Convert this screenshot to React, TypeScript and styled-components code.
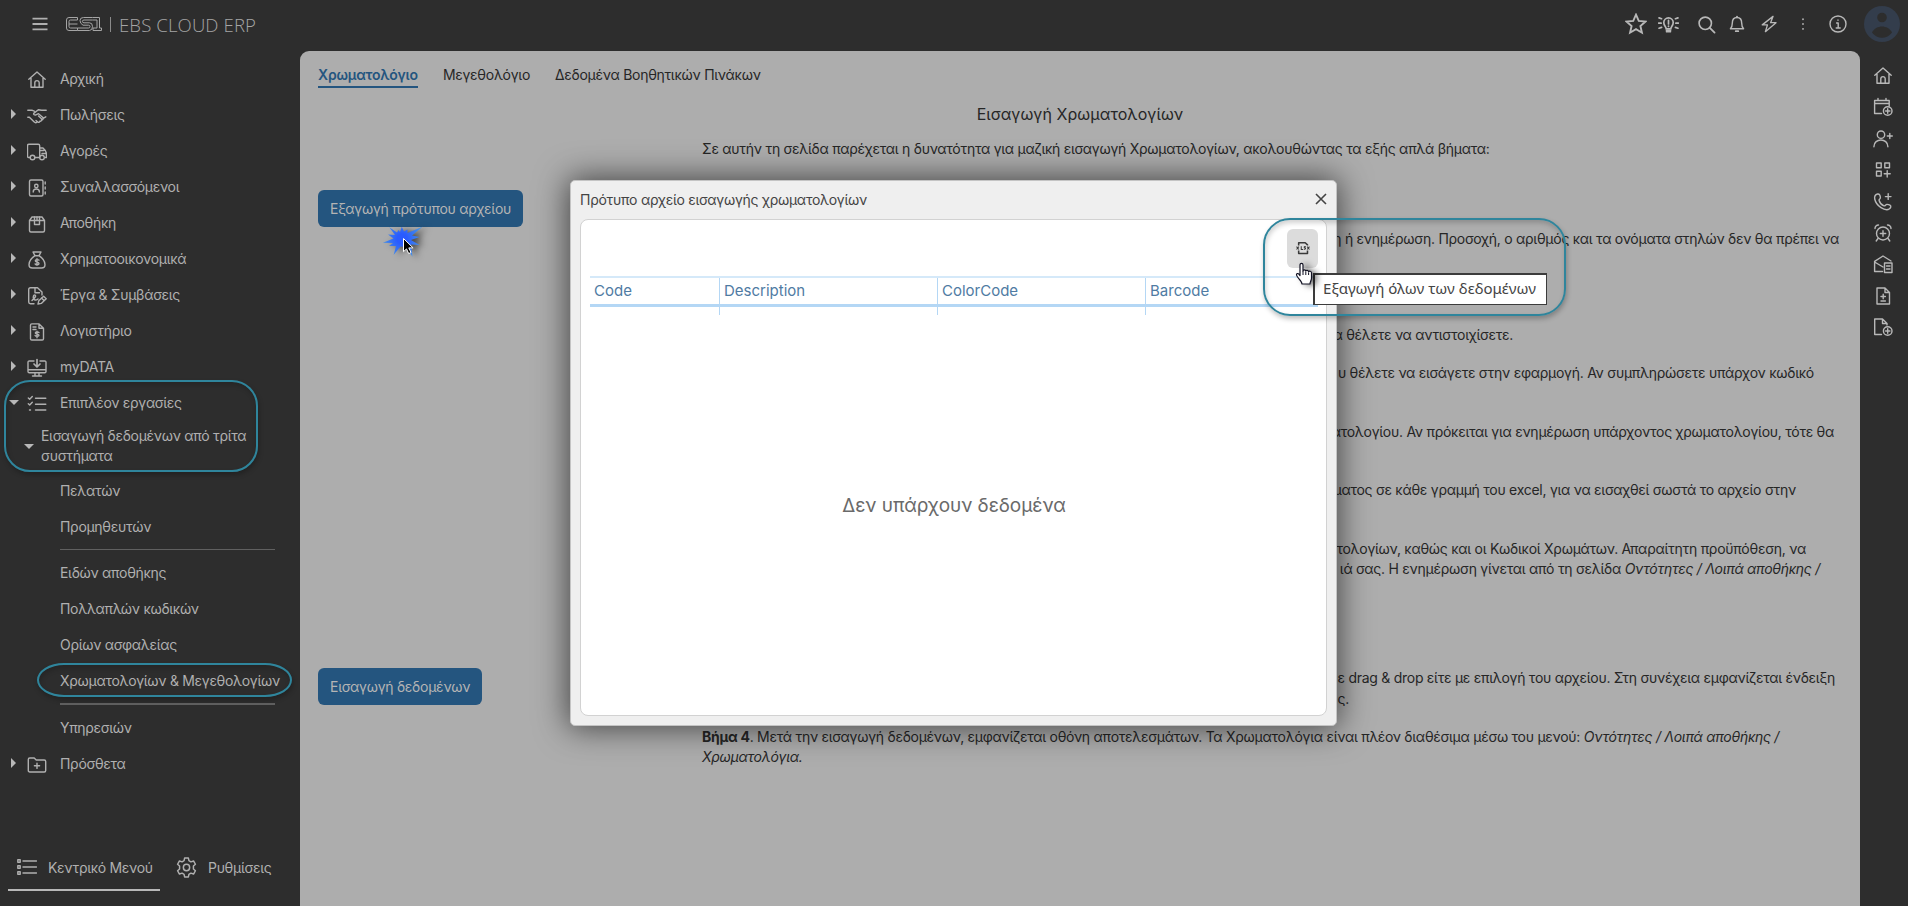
import React from "react";
import styled, { createGlobalStyle, css } from "styled-components";

const GlobalStyle = createGlobalStyle`
  *, *::before, *::after { box-sizing: border-box; }
  html, body { margin: 0; padding: 0; background: #2d2d2d; }
  body {
    font-family: Inter, "Liberation Sans", sans-serif;
    font-size: 14px;
    letter-spacing: -0.27px;
    overflow: hidden;
  }
`;

const Page = styled.div`
  position: relative;
  width: 1908px;
  height: 906px;
  display: flex;
  flex-direction: column;
  background: #2d2d2d;
  color: #b0b0b0;
  overflow: hidden;
`;

/* ---------- icons ---------- */

const Svg = styled.svg<{ $w: number }>`
  display: block;
  width: ${(p) => p.$w}px;
  height: ${(p) => p.$w}px;
  flex: none;
  fill: none;
  stroke: currentColor;
  stroke-width: 1.4;
  stroke-linecap: round;
  stroke-linejoin: round;
`;

const shapes: Record<string, React.ReactNode> = {
  menu: <path strokeWidth="1.8" strokeLinecap="butt" d="M2.5 4.7h15M2.5 10h15M2.5 15.3h15" />,
  home: <path d="M1.8 9.2 10 2l8.200 7.200M4 8v9.300h12V8M7.800 17.300v-4.500a2.200 2.200 0 0 1 4.400 0v4.500" />,
  handshake: (
    <>
      <path d="M.8 4.300h4.500l2 .9M19.200 4.300h-4.500l-3.400-.5-4.600 3.600c-.6 1 1 2 2.200 1.500l2.600-1.200 5 4.300M.8 11.200h1.600l4.600 4.600c1 1 2.200 1 3 .2" />
      <path d="m9 14.500 2 1.700c.8.500 2-.1 1.800-1.100 1 .5 2-.3 1.700-1.300 1.100.3 1.800-.7 1.500-1.500l2.800-1.500M11.500 10l3 2.700" />
    </>
  ),
  truck: (
    <>
      <path d="M3 15.500H1.700A1.200 1.200 0 0 1 .5 14.300V3.700c0-.9.600-1.500 1.500-1.500h9.200c.9 0 1.500.6 1.500 1.500v11.800H8M12.700 6h3.300c1.900 1.600 3.300 3.400 3.400 5.500v4h-1M13 8.500h4M15 11.500h4" />
      <circle cx="5.500" cy="15.500" r="2.300" />
      <circle cx="15" cy="15.500" r="2.300" />
    </>
  ),
  contacts: (
    <>
      <rect x="2.500" y="2" width="13.500" height="16" rx="1.500" />
      <circle cx="9.300" cy="8" r="1.700" />
      <path d="M6.200 14c0-4 6.200-4 6.200 0M18.200 4v2M18.200 9v2M18.200 14v2" />
    </>
  ),
  box: (
    <>
      <path d="M2.500 6.500 5 3h10l2.500 3.500v10c0 1-.6 1.500-1.500 1.500H4c-.9 0-1.500-.5-1.500-1.500zM2.500 6.500h15" />
      <path d="M7.500 3v7.500h5V3M10 3v3.500" />
    </>
  ),
  money: (
    <>
      <path d="M6 2h8l-2 3.700H8zM8 5.700C4.500 8 2 11 2 14.800 2 17 3.500 18 5.500 18h9c2 0 3.500-1 3.500-3.200 0-3.800-2.500-6.800-6-9.100" />
      <path d="M12 10.200c-.5-.8-3.700-1-3.700.6s3.700 1 3.700 2.700-3.400 1.500-3.900.4M10 8.700v6.500" />
    </>
  ),
  contract: (
    <>
      <path d="M7 17.700H3.500c-1 0-1.800-.7-1.800-1.700V3.500c0-1 .8-1.800 1.800-1.800h7L15 6v3" />
      <path d="M8 2v4.700h4.500M5 14.500c3-3 4.500-4.500 3-5.500s-3 4 0 5c1 .2 2-.2 3-1M11 18l.8-3.200 4.800-4.600 2.600 2.500-4.900 4.700zM14.500 12l2.500 2.600" />
    </>
  ),
  invoice: (
    <>
      <path d="M3.500 3.200c0-.8.600-1.300 1.300-1.300h7.300l4.400 4.300v10.500c0 .8-.6 1.300-1.300 1.300H4.800c-.8 0-1.300-.5-1.300-1.300zM12 2v4.300h4.500M6 5h3M6 7.500h3" />
      <path d="M12 10.600c-.5-.8-3.700-1-3.700.4s3.700.8 3.700 2.300-3.400 1.300-3.900.2M10 9.200v6.500" />
    </>
  ),
  download: (
    <>
      <path d="M7 3H2.300C1.600 3 1 3.500 1 4.200v9.300c0 .7.600 1.200 1.300 1.200h15.400c.7 0 1.300-.5 1.300-1.200V4.200C19 3.500 18.400 3 17.700 3H13M1 11.800h18M8 14.700V18M12 14.700V18M5.500 18h9" />
      <path strokeWidth="1.700" d="M10 1.500v7.300M7 6l3 3 3-3" />
    </>
  ),
  tasks: (
    <path d="m1.300 4 1.400 1.300L5.300 2.500M1.300 9.700 2.700 11l2.600-2.800M8.500 4.300h10.300M8.500 10.300h10.300M8.500 16h10.300M2.500 16h1" />
  ),
  folder: (
    <path d="M1.300 15.500v-11c0-.9.600-1.500 1.500-1.500h4.400l2 2h8c.9 0 1.500.6 1.500 1.500v9c0 .9-.6 1.500-1.500 1.500H2.800c-.9 0-1.500-.6-1.500-1.500zM10 8.200v5.200M7.400 10.800h5.200" />
  ),
  list: (
    <path d="M.8 2.800h2.400v2.400H.8zM.8 8.800h2.400v2.400H.8zM.8 14.800h2.400v2.400H.8zM6 4h13.500M6 10h13.500M6 16h13.500" />
  ),
  gear: (
    <>
      <circle cx="10" cy="10" r="3" />
      <path d="m8.200 1-.5 2.500-1.900 1.100-2.500-.8-1.800 3.100 1.900 1.700v2.800l-1.900 1.700 1.800 3.100 2.500-.8 1.900 1.100.5 2.500h3.600l.5-2.500 1.900-1.100 2.500.8 1.800-3.100-1.900-1.700V8.600l1.900-1.700-1.800-3.100-2.500.8-1.900-1.100-.5-2.500z" />
    </>
  ),
  star: (
    <path strokeWidth="1.700" strokeLinejoin="miter" d="m10 1.500 2.500 5.600 6.200.6-4.700 4.100 1.400 6.100-5.400-3.200-5.400 3.200L6 11.800 1.300 7.700l6.200-.6z" />
  ),
  bulb: (
    <>
      <path strokeWidth="1.600" d="M7.800 14.200c0-2.200-2.300-3-2.300-6a4.500 4.500 0 0 1 9 0c0 3-2.300 3.800-2.300 6zM8.200 16.800h3.600M10 6v3.500M10 11.500v.3M3 8.700H.5M3.400 4.500 1 3.700M3.400 12.700 1 13.500M17 8.700h2.500M16.600 4.500l2.400-.8M16.600 12.700l2.400.8" />
      <path strokeWidth="2.400" d="M8.500 16h3" />
    </>
  ),
  search: (
    <>
      <circle cx="8.700" cy="8.700" r="6.500" strokeWidth="1.700" />
      <path strokeWidth="1.900" d="m13.500 13.500 5 5" />
    </>
  ),
  bell: (
    <>
      <path strokeWidth="1.600" d="M2.700 15.300h14.600c-1.500-1.500-2.100-2.700-2.100-6.300 0-3.700-2-6.200-5.200-6.200S4.800 5.300 4.800 9c0 3.600-.6 4.800-2.100 6.300z" />
      <path strokeWidth="2" d="M8.600 18h2.800M10 1.700v.8" />
    </>
  ),
  bolt: <path d="M14.500 1.500 2.500 11h5.800L6 18.500 17.800 8.500h-6z" strokeWidth="1.500" />,
  dots: <path strokeWidth="2.200" d="M10 4v.1M10 10v.1M10 16v.1" />,
  info: (
    <>
      <circle cx="10" cy="10" r="8" />
      <path d="M8.600 9h1.600v5M8.200 14h4M10 6v.3" />
    </>
  ),
  calendarPlus: (
    <>
      <path d="M8.500 16.500H1.600v-13h14.600V9M1.600 6.500h14.600M5 1.500v2M13 1.500v2" />
      <circle cx="14.700" cy="14" r="4.300" />
      <path d="M14.700 11.800v4.400M12.500 14h4.400" />
    </>
  ),
  userPlus: (
    <>
      <circle cx="8" cy="5.700" r="3.700" />
      <path d="M.9 17.700c0-9 14-9 14 0M16.800 4.500v5M14.300 7h5" />
    </>
  ),
  gridPlus: (
    <path d="M3.500 3h4.700v4.700H3.500zM11.800 3h4.700v4.700h-4.700zM3.500 11.300h4.700V16H3.500zM14.200 10.800V17M11.200 13.800h6" />
  ),
  phonePlus: (
    <path d="M4.500 2c2-.5 2.700 1.700 2.900 3.600.1 1.400-1.700 1.600-1.300 2.900.8 2.500 2.500 4.500 4.900 5.300 1.300.4 1.600-1.500 3-1.400 2 .1 4.500 1 3.700 2.900-1.400 3.300-5.800 3-9.700.4-3-2-5.500-5.200-6.300-8.700C1.300 4.500 2.500 2.500 4.500 2zM15.200 1.800v5.600M12.400 4.600H18" />
  ),
  alarmPlus: (
    <>
      <circle cx="10" cy="10.500" r="6.500" />
      <path d="M10 7.800v5.400M7.300 10.500h5.400M2 5.500c0-2.300 1.500-3.500 3.500-3.500M18 5.500c0-2.300-1.500-3.500-3.500-3.500M5 15.500 3.200 18M15 15.500l1.800 2.500" />
    </>
  ),
  mailDoc: (
    <path d="M9.500 17.500H1.600V7.300L10 2l8 5M1.600 8l8.400 5M11.500 9h7.500v9.500h-7.500zM13.500 12h3.500M13.500 15h3.500" />
  ),
  docPlus: (
    <path d="M4 2h8l4.500 4.500V18H4zM12 2v4.500h4.500M10.200 8.300v4.400M8 10.500h4.400M8 15h4.400" />
  ),
  fileAdd: (
    <>
      <path d="M8.500 17.500H1.700V2h7.800L14 6.500V8M9.500 2v4.500H14" />
      <circle cx="14.700" cy="14" r="4.300" />
      <path d="M14.700 11.800v4.400M12.500 14h4.400" />
    </>
  ),
  xls: (
    <>
      <path strokeWidth="2.200" strokeLinecap="butt" d="M3.800 6.500V2.500h9.400l3.200 3v1M3.800 13.500V17.800h12.600V13.500" />
      <path strokeWidth="1.500" strokeLinecap="butt" d="M.8 8l3.200 4.200M4 8 .8 12.200M7.500 7.500V12H10M14 8.200c-2.600-.8-3 1-1.300 1.600s1 2.500-1.500 1.800M16 8l3.200 4.200M19.200 8 16 12.200" />
    </>
  ),
};

const Icon = ({ name, size = 20 }: { name: string; size?: number }) => (
  <Svg $w={size} viewBox="0 0 20 20">
    {shapes[name]}
  </Svg>
);

/* ---------- header ---------- */

const Header = styled.header`
  height: 51px;
  flex: none;
  display: flex;
  align-items: flex-start;
  padding: 2px 8px 0 30px;
`;

const Brand = styled.div`
  display: flex;
  align-items: center;
  height: 44px;
  gap: 16px;
`;

const Logo = styled.div`
  display: flex;
  align-items: center;
  color: #a5a5a5;
  svg { display: block; }
`;

const LogoBar = styled.span`
  width: 1px;
  height: 15px;
  margin: 0 8px 0 8px;
  background: #8a8a8a;
`;

const LogoText = styled.span`
  font: 300 18.600px/20px "Open Sans", "Noto Sans", sans-serif;
  letter-spacing: 0.1px;
  padding-top: 1px;
`;

const HeaderTools = styled.div`
  margin-left: auto;
  height: 44px;
  display: flex;
  align-items: center;
`;

const Tool = styled.span<{ $gap: number }>`
  margin-right: ${(p) => p.$gap}px;
  color: #b8b8b8;
`;

/* ---------- layout ---------- */

const Body = styled.div`
  display: flex;
  flex: 1;
  min-height: 0;
`;

const Sidebar = styled.nav`
  width: 300px;
  flex: none;
  display: flex;
  flex-direction: column;
  padding-top: 9px;
  letter-spacing: -0.3px;
`;

const MenuRow = styled.div`
  height: 36px;
  display: flex;
  align-items: center;
  padding-left: 11px;
`;

const Caret = styled.span<{ $open?: boolean; $hidden?: boolean }>`
  width: 0;
  height: 0;
  flex: none;
  border: solid transparent;
  ${(p) =>
    p.$open
      ? css`
          border-width: 5px 5px 0;
          border-top-color: #b8b8b8;
          margin: 0 8px 0 -2px;
        `
      : css`
          border-width: 5px 0 5px 5px;
          border-left-color: #b8b8b8;
          margin-right: 11px;
        `}
  visibility: ${(p) => (p.$hidden ? "hidden" : "visible")};
`;

const MenuIcon = styled.span`
  width: 33px;
  padding-top: 3px;
`;

const SubGroup = styled.div`
  height: 52px;
  display: flex;
  align-items: center;
  padding-left: 26px;
  line-height: 20px;
`;

const SubLabel = styled.span`
  width: 215px;
  margin-left: -1px;
`;

const SubRow = styled.div`
  height: 36px;
  display: flex;
  align-items: center;
  padding-left: 60px;
  white-space: nowrap;
`;

const Divider = styled.div<{ $thick?: boolean }>`
  height: ${(p) => (p.$thick ? 2 : 1)}px;
  flex: none;
  width: 215px;
  margin: 5px 0 4px 60px;
  background: #606060;
`;

const SideTabs = styled.div`
  margin-top: auto;
  margin-bottom: 15px;
  padding-left: 8px;
  display: flex;
  height: 46px;
`;

const SideTab = styled.div<{ $active?: boolean; $width: number }>`
  width: ${(p) => p.$width}px;
  display: flex;
  align-items: center;
  gap: 11px;
  padding-left: 9px;
  border-bottom: 2px solid ${(p) => (p.$active ? "#b8b8b8" : "transparent")};
  margin-right: 7px;
  white-space: nowrap;
`;

const RightBar = styled.aside`
  width: 48px;
  flex: none;
  display: flex;
  flex-direction: column;
  align-items: center;
  gap: 11.400px;
  padding: 15px 2px 0 0;
  color: #b8b8b8;
`;

const Main = styled.main`
  width: 1560px;
  flex: none;
  background: #adadad;
  color: #262626;
  border-radius: 9px 9px 0 0;
  padding: 12px 15px 0 18px;
`;

const Tabs = styled.div`
  display: flex;
  gap: 25px;
  height: 28px;
`;

const Tab = styled.span<{ $active?: boolean }>`
  height: 25px;
  line-height: 24px;
  ${(p) =>
    p.$active &&
    css`
      color: #24557f;
      font-weight: 600;
      letter-spacing: -0.2px;
      border-bottom: 2px solid #24557f;
    `}
`;

const Columns = styled.div`
  display: flex;
`;

const Actions = styled.div`
  width: 384px;
  flex: none;
  display: flex;
  flex-direction: column;
  align-items: flex-start;
  padding-top: 99px;
  gap: 441px;
`;

const ActionButton = styled.button`
  height: 37px;
  padding: 0 12px;
  border: 0;
  border-radius: 6px;
  background: #24557f;
  color: #b4b4b4;
  font: 400 14px/20px Inter, sans-serif;
  letter-spacing: -0.26px;
  white-space: nowrap;
`;

const Guide = styled.section`
  flex: 1;
  min-width: 0;
  line-height: 20px;
`;

const Title = styled.h1`
  margin: 13px 0 0;
  text-align: center;
  font: 400 16px/20px Inter, sans-serif;
  letter-spacing: 0.07px;
  padding-right: 387px;
`;

const Para = styled.p<{ $top: number; $end?: number }>`
  margin: ${(p) => p.$top}px 0 0;
  white-space: nowrap;
  ${(p) =>
    p.$end !== undefined &&
    css`
      text-align: right;
      padding-right: ${p.$end}px;
    `}
`;

/* ---------- dialog ---------- */

const Dialog = styled.div`
  position: absolute;
  left: 570px;
  top: 180px;
  width: 767px;
  height: 546px;
  display: flex;
  flex-direction: column;
  padding: 0 9px 9px;
  background: #efefef;
  border: 1px solid #c4c4c4;
  border-radius: 5px;
  box-shadow: 0 0 32px 2px rgba(0, 0, 0, 0.62);
  color: #444;
`;

const DialogHead = styled.div`
  height: 38px;
  flex: none;
  display: flex;
  justify-content: space-between;
  align-items: center;
  padding-bottom: 1px;
`;

const CloseIcon = styled.svg`
  width: 12px;
  height: 12px;
  margin-top: -2px;
  stroke: #444;
  stroke-width: 1.6;
`;

const DialogBody = styled.div`
  flex: 1;
  display: flex;
  flex-direction: column;
  background: #fff;
  border: 1px solid #d2d2d2;
  border-radius: 8px;
  padding: 9px 8px 8px 9px;
`;

const GridTools = styled.div`
  height: 47px;
  display: flex;
  justify-content: flex-end;
`;

const ExportButton = styled.button`
  width: 31px;
  height: 39px;
  padding: 0 0 2px;
  border: 0;
  border-radius: 6px;
  background: #dcdcdc;
  color: #3a3a3a;
  display: flex;
  align-items: center;
  justify-content: center;
`;

const GridHead = styled.div`
  display: grid;
  grid-template-columns: 130px 218px 208px 1fr;
  height: 31px;
  border-top: 2px solid #d5e9f9;
  border-bottom: 3px solid #b4d7f5;
  color: #4f7ba3;
  font-size: 15px;
  letter-spacing: 0;
`;

const HeadCell = styled.span<{ $last?: boolean }>`
  padding: 0 4px;
  line-height: 25px;
  border-right: ${(p) => (p.$last ? "0" : "1px solid #b4d7f5")};
`;

const GridStub = styled.div`
  display: grid;
  grid-template-columns: 130px 218px 208px 1fr;
  height: 8px;
`;

const Empty = styled.div`
  flex: 1;
  display: flex;
  align-items: center;
  justify-content: center;
  padding-bottom: 11px;
  font-size: 19px;
  letter-spacing: -0.05px;
  color: #6a6a6a;
`;

/* ---------- overlays ---------- */

const Marker = styled.div<{ $x: number; $y: number; $w: number; $h: number; $r: string }>`
  position: absolute;
  left: ${(p) => p.$x}px;
  top: ${(p) => p.$y}px;
  width: ${(p) => p.$w}px;
  height: ${(p) => p.$h}px;
  border: 2px solid #2f859c;
  border-radius: ${(p) => p.$r};
  box-shadow: 1px 3px 5px rgba(0, 0, 0, 0.25), inset 1px 3px 5px rgba(0, 0, 0, 0.18);
`;

const Tooltip = styled.div`
  position: absolute;
  left: 1313px;
  top: 273px;
  width: 234px;
  height: 32px;
  border: solid #3c3c3c;
  border-width: 2px 1px 1px 2px;
  background: #fff;
  color: #444;
  font: 400 15px/27px "Noto Sans", sans-serif;
  letter-spacing: 0.05px;
  padding-left: 8px;
  white-space: nowrap;
`;

const Pointer = styled.svg<{ $x: number; $y: number; $w: number; $h: number }>`
  position: absolute;
  left: ${(p) => p.$x}px;
  top: ${(p) => p.$y}px;
  width: ${(p) => p.$w}px;
  height: ${(p) => p.$h}px;
  overflow: visible;
`;

const Soft = styled.g`
  filter: drop-shadow(5px 1px 3px rgba(0, 0, 0, 0.55));
`;

const menu: [string, string][] = [
  ["handshake", "Πωλήσεις"],
  ["truck", "Αγορές"],
  ["contacts", "Συναλλασσόμενοι"],
  ["box", "Αποθήκη"],
  ["money", "Χρηματοοικονομικά"],
  ["contract", "Έργα & Συμβάσεις"],
  ["invoice", "Λογιστήριο"],
  ["download", "myDATA"],
];

const tools: [string, number, number][] = [
  ["star", 22, 11],
  ["bulb", 21, 18],
  ["search", 19, 12],
  ["bell", 18, 14],
  ["bolt", 18, 17],
  ["dots", 16, 17],
  ["info", 20, 16],
];

const shortcuts = [
  "home", "calendarPlus", "userPlus", "gridPlus", "phonePlus",
  "alarmPlus", "mailDoc", "docPlus", "fileAdd",
];

export default function App() {
  return (
    <Page>
      <GlobalStyle />
      <Header>
        <Brand>
          <Icon name="menu" />
          <Logo>
            <svg width="36" height="14" viewBox="0 0 36 14" fill="none" stroke="currentColor" strokeWidth="1">
              <path d="M11.500.5H3Q.5.500.500 3v8q0 2.500 2.500 2.500h8.500M11.500 3H4.500Q3 3 3 4.500v5Q3 11 4.500 11h7M3 7h8.500M11.500.5V3M11.500 11v2.500" />
              <path d="M26.500.5h-9Q14 .5 14 3.500T17 8.200h5.500q1.500 0 1.500 1.400T22.500 11H11.500M26.500 3h-8.500q-1.600 0-1.600 1.400T18 5.800h5.500q3 0 3 3.700t-3 4h-12M26.500.5h7V11H35.500v2.500H27V11h4V3h-4.500" />
            </svg>
            <LogoBar />
            <LogoText>EBS CLOUD ERP</LogoText>
          </Logo>
        </Brand>
        <HeaderTools>
          {tools.map(([name, size, gap]) => (
            <Tool key={name} $gap={gap}>
              <Icon name={name} size={size} />
            </Tool>
          ))}
          <svg width="36" height="36" viewBox="0 0 36 36">
            <circle cx="18" cy="18" r="18" fill="#333d4c" />
            <circle cx="18" cy="11.500" r="4.800" fill="#2d2d2d" />
            <path d="M8 26.500c4-8 16-8 20 0-5 7-15 7-20 0z" fill="#2d2d2d" />
          </svg>
        </HeaderTools>
      </Header>

      <Body>
        <Sidebar>
          <MenuRow>
            <Caret $hidden />
            <MenuIcon><Icon name="home" /></MenuIcon>
            Αρχική
          </MenuRow>
          {menu.map(([icon, label]) => (
            <MenuRow key={label}>
              <Caret />
              <MenuIcon><Icon name={icon} /></MenuIcon>
              {label}
            </MenuRow>
          ))}
          <MenuRow>
            <Caret $open />
            <MenuIcon><Icon name="tasks" /></MenuIcon>
            Επιπλέον εργασίες
          </MenuRow>
          <SubGroup>
            <Caret $open />
            <SubLabel>Εισαγωγή δεδομένων από τρίτα συστήματα</SubLabel>
          </SubGroup>
          <SubRow>Πελατών</SubRow>
          <SubRow>Προμηθευτών</SubRow>
          <Divider />
          <SubRow>Ειδών αποθήκης</SubRow>
          <SubRow>Πολλαπλών κωδικών</SubRow>
          <SubRow>Ορίων ασφαλείας</SubRow>
          <SubRow>Χρωματολογίων & Μεγεθολογίων</SubRow>
          <Divider $thick />
          <SubRow>Υπηρεσιών</SubRow>
          <MenuRow>
            <Caret />
            <MenuIcon><Icon name="folder" /></MenuIcon>
            Πρόσθετα
          </MenuRow>
          <SideTabs>
            <SideTab $active $width={152}>
              <Icon name="list" />
              Κεντρικό Μενού
            </SideTab>
            <SideTab $width={120}>
              <Icon name="gear" size={21} />
              Ρυθμίσεις
            </SideTab>
          </SideTabs>
        </Sidebar>

        <Main>
          <Tabs>
            <Tab $active>Χρωματολόγιο</Tab>
            <Tab>Μεγεθολόγιο</Tab>
            <Tab>Δεδομένα Βοηθητικών Πινάκων</Tab>
          </Tabs>
          <Columns>
            <Actions>
              <ActionButton>Εξαγωγή πρότυπου αρχείου</ActionButton>
              <ActionButton>Εισαγωγή δεδομένων</ActionButton>
            </Actions>
            <Guide>
              <Title>Εισαγωγή Χρωματολογίων</Title>
              <Para $top={15}>
                Σε αυτήν τη σελίδα παρέχεται η δυνατότητα για μαζική εισαγωγή Χρωματολογίων, ακολουθώντας τα εξής απλά βήματα:
              </Para>
              <Para $top={70} $end={6}>
                η ή ενημέρωση. Προσοχή, ο αριθμός και τα ονόματα στηλών δεν θα πρέπει να
              </Para>
              <Para $top={76} $end={332}>α θέλετε να αντιστοιχίσετε.</Para>
              <Para $top={18} $end={31}>
                υ θέλετε να εισάγετε στην εφαρμογή. Αν συμπληρώσετε υπάρχον κωδικό
              </Para>
              <Para $top={39} $end={11}>
                ατολογίου. Αν πρόκειται για ενημέρωση υπάρχοντος χρωματολογίου, τότε θα
              </Para>
              <Para $top={38} $end={49}>
                ματος σε κάθε γραμμή του excel, για να εισαχθεί σωστά το αρχείο στην
              </Para>
              <Para $top={39} $end={39}>
                ατολογίων, καθώς και οι Κωδικοί Χρωμάτων. Απαραίτητη προϋπόθεση, να
              </Para>
              <Para $top={0} $end={25}>
                ιά σας. Η ενημέρωση γίνεται από τη σελίδα <i>Οντότητες / Λοιπά αποθήκης /</i>
              </Para>
              <Para $top={89} $end={10}>
                ε drag & drop είτε με επιλογή του αρχείου. Στη συνέχεια εμφανίζεται ένδειξη
              </Para>
              <Para $top={1} $end={496}>ς.</Para>
              <Para $top={18}>
                <b>Βήμα 4</b>. Μετά την εισαγωγή δεδομένων, εμφανίζεται οθόνη αποτελεσμάτων. Τα Χρωματολόγια είναι πλέον
                διαθέσιμα μέσω του μενού: <i>Οντότητες / Λοιπά αποθήκης /<br />Χρωματολόγια.</i>
              </Para>
            </Guide>
          </Columns>
        </Main>

        <RightBar>
          {shortcuts.map((name) => (
            <Icon key={name} name={name} />
          ))}
        </RightBar>
      </Body>

      <Dialog>
        <DialogHead>
          <span>Πρότυπο αρχείο εισαγωγής χρωματολογίων</span>
          <CloseIcon viewBox="0 0 12 12"><path d="m1 1 10 10M11 1 1 11" /></CloseIcon>
        </DialogHead>
        <DialogBody>
          <GridTools>
            <ExportButton><Icon name="xls" size={14} /></ExportButton>
          </GridTools>
          <GridHead>
            <HeadCell>Code</HeadCell>
            <HeadCell>Description</HeadCell>
            <HeadCell>ColorCode</HeadCell>
            <HeadCell $last>Barcode</HeadCell>
          </GridHead>
          <GridStub>
            <HeadCell />
            <HeadCell />
            <HeadCell />
          </GridStub>
          <Empty>Δεν υπάρχουν δεδομένα</Empty>
        </DialogBody>
      </Dialog>

      <Marker $x={4} $y={380} $w={254} $h={92} $r="26px" />
      <Marker $x={37} $y={663} $w={255} $h={34} $r="27px / 17px" />
      <Marker $x={1263} $y={218} $w={303} $h={98} $r="27px" />
      <Tooltip>Εξαγωγή όλων των δεδομένων</Tooltip>

      <Pointer $x={380} $y={215} $w={60} $h={50} viewBox="0 0 60 50">
        <defs>
          <radialGradient id="burst" gradientUnits="userSpaceOnUse" cx="22" cy="24" r="20">
            <stop offset="0.25" stopColor="#2a5bff" />
            <stop offset="1" stopColor="#4592e6" />
          </radialGradient>
        </defs>
        <Soft>
          <path
            fill="url(#burst)"
            d="M9.300 12.300 17 17.500 18.500 15 20 17 21.800 11.700 24 16.500 27.500 14.500 27.500 18 42.500 11.700 32 20.500 39.500 22 31 25 39.600 30 31 29.500 32.500 41.700 26 32 20.500 31.500 13.600 40 16 31 9 31 13 28 2.900 27.700 13.500 23.500 8 19.500 15 20z"
          />
        </Soft>
        <path fill="#000" stroke="#fff" strokeWidth="1" d="M23.500 23.500v13.200l3-2.800 2.200 4.700 2.300-1.100-2.200-4.600h4.300z" />
      </Pointer>
      <Pointer $x={1295} $y={262} $w={20} $h={24} viewBox="0 0 20 24">
        <Soft>
          <path
            fill="#fff"
            stroke="#111122"
            strokeWidth="1.200"
            strokeLinejoin="round"
            d="M5 13.500V3c0-2.300 3-2.300 3 0v6c.2-1.700 2.700-1.500 2.800.2.400-1.400 2.600-1.200 2.800.6.600-1.100 2.700-.8 2.900 1v5.500c0 2-1.500 3.500-1.500 5.700H7c0-2.800-5-6.200-5.500-9-.3-1.500 1.600-2 2.400-.8z"
          />
        </Soft>
        <path stroke="#111122" strokeWidth="1" d="M8 9v4M10.800 10v3M13.600 10.500v2.500" />
      </Pointer>
    </Page>
  );
}
